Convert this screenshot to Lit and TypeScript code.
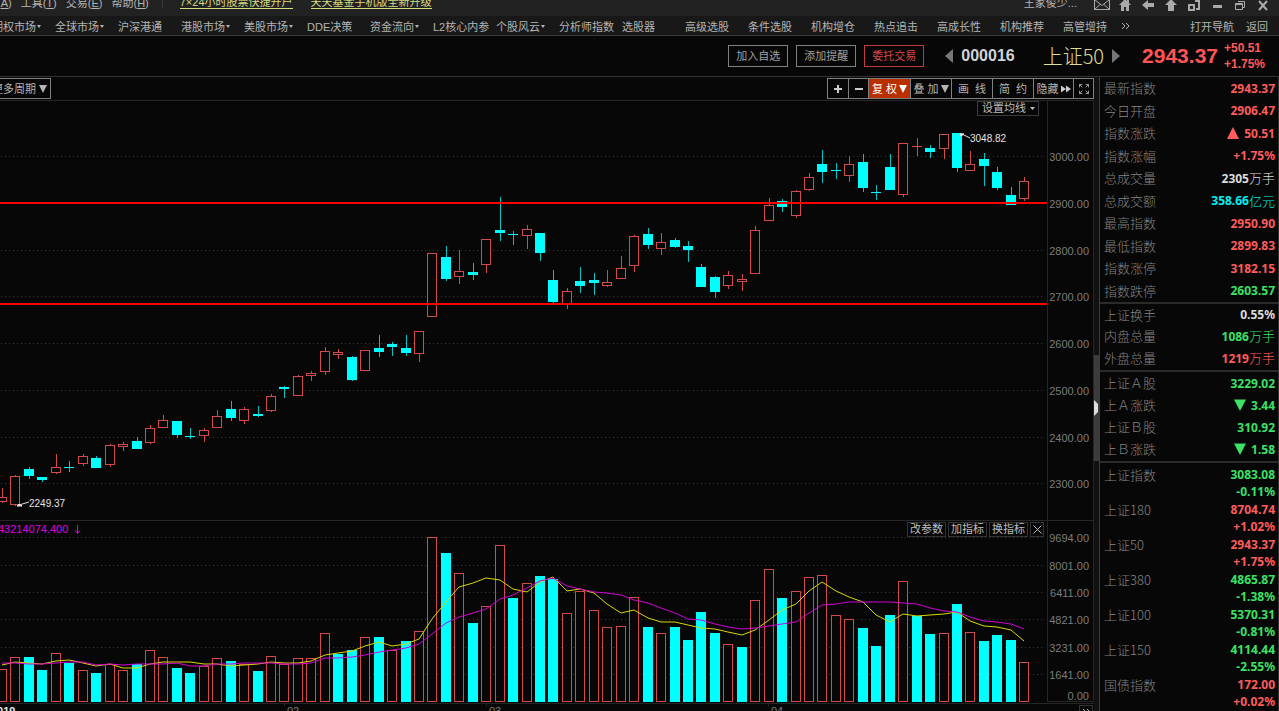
import { LitElement, html, svg, css } from "lit";
import { customElement } from "lit/decorators.js";
import { classMap } from "lit/directives/class-map.js";

type Candle = [kind: "r" | "c", high: number, top: number, bottom: number, low: number, volume: number];

/* One entry per trading day: colour, high, body top, body bottom, low, top of volume bar */
const CANDLES: Candle[] = [
  ["r", 488, 497, 502, 503, 669], ["r", 475, 476, 505, 506, 657], ["c", 467, 469, 476, 479, 657],
  ["c", 477, 477, 480, 482, 670], ["r", 454, 467, 473, 474, 653], ["c", 461, 467, 468, 472, 663],
  ["r", 454, 456, 464, 466, 670], ["c", 456, 458, 468, 468, 673], ["r", 444, 445, 465, 467, 664],
  ["r", 442, 444, 447, 451, 670], ["c", 437, 441, 449, 449, 664], ["r", 425, 428, 443, 444, 650],
  ["r", 415, 420, 428, 428, 657], ["c", 421, 421, 435, 438, 668], ["c", 428, 436, 437, 439, 673],
  ["r", 428, 430, 436, 442, 666], ["r", 410, 416, 428, 428, 658], ["c", 401, 409, 418, 421, 661],
  ["r", 407, 409, 421, 424, 664], ["c", 406, 414, 416, 417, 671], ["r", 394, 396, 411, 412, 656],
  ["c", 386, 387, 389, 398, 664], ["r", 375, 376, 396, 396, 658], ["r", 371, 373, 376, 381, 658],
  ["r", 347, 351, 372, 375, 633], ["r", 349, 352, 355, 359, 654], ["c", 356, 357, 380, 381, 650],
  ["r", 350, 350, 371, 371, 637], ["c", 335, 348, 352, 357, 637], ["c", 342, 344, 347, 356, 650],
  ["c", 335, 348, 353, 356, 641], ["r", 331, 331, 354, 362, 631], ["r", 253, 253, 317, 317, 537],
  ["c", 246, 257, 279, 281, 553], ["r", 250, 271, 277, 284, 573], ["c", 263, 272, 275, 280, 623],
  ["r", 239, 239, 265, 273, 606], ["c", 197, 230, 233, 241, 545], ["c", 231, 234, 235, 245, 598],
  ["r", 225, 229, 236, 249, 583], ["c", 233, 233, 253, 261, 576], ["c", 270, 280, 302, 303, 579],
  ["r", 288, 291, 304, 309, 613], ["c", 267, 281, 286, 293, 591], ["c", 273, 280, 283, 295, 610],
  ["r", 270, 282, 286, 287, 627], ["r", 256, 268, 279, 279, 626], ["r", 235, 236, 266, 272, 597],
  ["c", 228, 234, 245, 249, 627], ["r", 233, 242, 249, 255, 633], ["c", 238, 240, 247, 248, 627],
  ["c", 241, 246, 250, 262, 640], ["c", 264, 267, 287, 287, 612], ["c", 276, 277, 292, 298, 633],
  ["r", 271, 275, 286, 289, 644], ["r", 274, 279, 282, 291, 647], ["r", 226, 230, 274, 274, 600],
  ["r", 198, 205, 221, 221, 569], ["c", 199, 201, 207, 212, 598], ["r", 190, 191, 216, 218, 591],
  ["r", 173, 177, 190, 191, 577], ["c", 150, 164, 172, 183, 575], ["c", 163, 170, 171, 179, 615],
  ["r", 156, 164, 176, 182, 619], ["c", 154, 162, 188, 192, 628], ["c", 185, 192, 193, 200, 646],
  ["c", 154, 167, 190, 190, 615], ["r", 143, 143, 195, 197, 581], ["r", 138, 146, 147, 156, 616],
  ["c", 145, 148, 152, 158, 634], ["r", 134, 134, 149, 159, 633], ["c", 133, 133, 168, 172, 604],
  ["r", 151, 164, 171, 171, 632], ["c", 153, 159, 166, 186, 641], ["c", 167, 172, 188, 190, 635],
  ["c", 187, 195, 205, 205, 640], ["r", 177, 181, 199, 201, 662],
];

/* Days whose volume bar takes the other colour than the candle */
const VOLUME_FLIPS: Record<number, "r" | "c"> = {
  21: "r", 25: "c", 29: "r", 37: "r", 43: "r", 44: "r", 55: "c", 61: "r", 62: "r", 68: "c",
};

const PITCH = 13.45;
const centre = (i: number) => Math.round(2 + PITCH * i);

const MA_FAST = [
  665, 662, 663, 664, 661, 660, 663, 666, 664, 668, 668, 664, 662, 662, 662, 664, 664, 666, 665, 664, 662, 663, 663,
  661, 655, 653, 651, 646, 642, 646, 644, 639, 619, 602, 587, 583, 578, 580, 589, 592, 582, 577, 591, 589, 593, 604,
  613, 610, 618, 622, 622, 625, 628, 629, 632, 635, 630, 620, 610, 604, 591, 582, 591, 597, 602, 615, 622, 614, 616,
  615, 614, 612, 621, 626, 627, 630, 641,
];
const MA_SLOW = [
  663, 663, 664, 664, 663, 662, 662, 665, 664, 665, 664, 664, 664, 663, 666, 666, 664, 664, 663, 663, 663, 664, 664,
  663, 658, 658, 657, 655, 652, 650, 648, 644, 634, 623, 617, 613, 609, 599, 595, 588, 581, 578, 586, 589, 592, 593,
  595, 600, 603, 608, 613, 619, 620, 624, 627, 629, 628, 626, 624, 622, 613, 605, 604, 602, 602, 602, 602, 603, 604,
  608, 611, 612, 617, 621, 622, 624, 629,
];
const polyline = (ys: number[]) => ys.map((y, i) => `${centre(i)},${y}`).join(" ");

const PRICE_AXIS: [string, number][] = [
  ["3000.00", 156], ["2900.00", 203], ["2800.00", 250], ["2700.00", 296],
  ["2600.00", 343], ["2500.00", 390], ["2400.00", 437], ["2300.00", 483],
];
const VOLUME_AXIS: [string, number][] = [
  ["9694.00", 537], ["8001.00", 565], ["6411.00", 592], ["4821.00", 619], ["3231.00", 647], ["1641.00", 674],
];

@customElement("stock-chart")
class StockChart extends LitElement {
  static styles = css`
    :host { display: flex; flex-direction: column; flex: 1; min-height: 0; }
    .pane { position: relative; display: flex; justify-content: flex-end; overflow: hidden; flex: none; }
    .price { height: 420px; }
    .volume { height: 183px; }
    .time { height: 17px; }
    svg { display: block; flex: none; overflow: visible; width: 1094px; height: 100%; }
    .crisp { shape-rendering: crispEdges; }
    .grid { stroke: #363636; stroke-dasharray: 1 3; }
    .frame { stroke: #262626; fill: none; }
    .rise { fill: #070707; stroke: #d24a4a; }
    .wick-r { stroke: #d24a4a; }
    .fall { fill: #00ffff; }
    .wick-c { stroke: #00c4c4; }
    .level { fill: #ff0000; }
    text { font-family: "Liberation Sans", sans-serif; font-size: 11px; fill: #7c7c7c; }
    .note { font-size: 10px; fill: #e4e4e4; }
    .pointer { stroke: #e4e4e4; fill: #e4e4e4; }
    .ma { fill: none; }
    .fast { stroke: #d8d800; }
    .slow { stroke: #d400d4; }
    .sum { fill: #e000e0; }
    .arrow { fill: none; stroke: #e000e0; }
    .year { fill: #e4e4e4; font-weight: bold; }
    .tools { position: absolute; top: 2px; right: 50px; display: flex; gap: 2px; }
    button {
      font: 11px/13px "Liberation Sans", "Noto Sans CJK SC", sans-serif;
      margin: 0; color: #bdbdbd; background: #070707; border: 1px solid #333; padding: 0 2px;
      display: flex; align-items: center; justify-content: center; gap: 4px; height: 15px; white-space: nowrap;
    }
    .average { position: absolute; top: 1px; right: 55px; padding: 0 3px 0 4px; border-color: #3a3a3a; }
    .close { width: 14px; padding: 0; }
    .icon { width: 9px; height: 9px; }
    .caret { width: 5px; height: 3px; }
    .more { position: absolute; top: 2px; right: 1px; width: 14px; padding: 0; }
  `;

  private candle([kind, high, top, bottom, low]: Candle, i: number) {
    const x = centre(i);
    const flat = bottom - top <= 1;
    const body = kind === "c"
      ? svg`<rect class="fall" x=${x - 5} y=${top} width="10" height=${bottom - top}></rect>`
      : flat
        ? svg`<line class="wick-r" x1=${x - 5} x2=${x + 5} y1=${top + 0.5} y2=${top + 0.5}></line>`
        : svg`<rect class="rise" x=${x - 4.5} y=${top + 0.5} width="9" height=${bottom - top - 1}></rect>`;
    return svg`<line class="wick-${kind}" x1=${x + 0.5} x2=${x + 0.5} y1=${high} y2=${low}></line>${body}`;
  }

  private bar([kind, , , , , top]: Candle, i: number) {
    const x = centre(i);
    return (VOLUME_FLIPS[i] ?? kind) === "c"
      ? svg`<rect class="fall" x=${x - 5} y=${top} width="10" height=${702 - top}></rect>`
      : svg`<rect class="rise" x=${x - 4.5} y=${top + 0.5} width="9" height=${701 - top}></rect>`;
  }

  private axis(rows: [string, number][]) {
    return rows.map(([label, y]) => svg`
      <line class="grid crisp" x1="-2999" x2="1045" y1=${y + 0.5} y2=${y + 0.5}></line>
      <text x="1089" y=${y + 5} text-anchor="end">${label}</text>`);
  }

  render() {
    return html`
      <div class="pane price">
        <svg viewBox="0 100 1094 420">
          ${this.axis(PRICE_AXIS)}
          <path class="frame crisp" d="M-2999 100.5H1094M1047.5 100V520M1093.5 100V520"></path>
          <g class="crisp">${CANDLES.map((c, i) => this.candle(c, i))}</g>
          <rect class="level" x="-2999" y="202" width="4046" height="2"></rect>
          <rect class="level" x="-2999" y="303" width="4046" height="2"></rect>
          <path class="pointer" d="M960 134h4l-3 2zM962 134l8 4"></path>
          <text class="note" x="970" y="142">3048.82</text>
          <path class="pointer" d="M17 506h5l-3-2zM19 505l10-3"></path>
          <text class="note" x="29" y="507">2249.37</text>
        </svg>
        <button class="average">设置均线
          <svg class="caret" viewBox="0 0 5 3"><path fill="#bdbdbd" d="M0 0h5L2.500 3z"></path></svg>
        </button>
      </div>
      <div class="pane volume">
        <svg viewBox="0 520 1094 183">
          ${this.axis(VOLUME_AXIS)}
          <text x="1089" y="700" text-anchor="end">0.00</text>
          <path class="frame crisp" d="M-2999 520.5H1094M1047.5 520V702M1093.5 520V702M1047 701.500H1094"></path>
          <g class="crisp">${CANDLES.map((c, i) => this.bar(c, i))}</g>
          <polyline class="ma fast" points=${polyline(MA_FAST)}></polyline>
          <polyline class="ma slow" points=${polyline(MA_SLOW)}></polyline>
          <text class="sum" x="-2" y="533">43214074.400</text>
          <path class="arrow" d="M77.500 525v8M75 530.500l2.500 3l2.500-3"></path>
        </svg>
        <div class="tools">
          <button>改参数</button><button>加指标</button><button>换指标</button>
          <button class="close" aria-label="关闭">
            <svg class="icon" viewBox="0 0 9 9"><path stroke="#bdbdbd" d="M0.500 0.500l8 8M8.500 0.500l-8 8"></path></svg>
          </button>
        </div>
      </div>
      <div class="pane time">
        <svg viewBox="0 703 1094 17">
          <path class="frame crisp" d="M-2999 703.500H1094M284.500 703v3M486.500 703v3M768.500 703v3"></path>
          <text class="year" x="-9" y="715">2019</text>
          <text x="287" y="715">02</text>
          <text x="489" y="715">03</text>
          <text x="771" y="715">04</text>
        </svg>
        <button class="more" aria-label="更多">
          <svg class="icon" viewBox="0 0 9 9"><path fill="none" stroke="#bdbdbd" d="M1 1l3 3l-3 3M5 1l3 3l-3 3"></path></svg>
        </button>
      </div>`;
  }
}

type Row = [label: string, value: string, tone: string, unit?: string, mark?: "up" | "down"];
const QUOTES: Row[] = [
  ["最新指数", "2943.37", "red"], ["今日开盘", "2906.47", "red"], ["指数涨跌", "50.51", "red", "", "up"],
  ["指数涨幅", "+1.75%", "red"], ["总成交量", "2305", "white", "万手"], ["总成交额", "358.66", "cyan", "亿元"],
  ["最高指数", "2950.90", "red"], ["最低指数", "2899.83", "red"], ["指数涨停", "3182.15", "red"],
  ["指数跌停", "2603.57", "green"],
];
const TURNOVER: Row[] = [
  ["上证换手", "0.55%", "white"], ["内盘总量", "1086", "green", "万手"], ["外盘总量", "1219", "red", "万手"],
];
const SHARES: Row[] = [
  ["上证Ａ股", "3229.02", "green"], ["上Ａ涨跌", "3.44", "green", "", "down"],
  ["上证Ｂ股", "310.92", "green"], ["上Ｂ涨跌", "1.58", "green", "", "down"],
];
const INDICES: [string, string, string, string][] = [
  ["上证指数", "3083.08", "-0.11%", "green"], ["上证180", "8704.74", "+1.02%", "red"],
  ["上证50", "2943.37", "+1.75%", "red"], ["上证380", "4865.87", "-1.38%", "green"],
  ["上证100", "5370.31", "-0.81%", "green"], ["上证150", "4114.44", "-2.55%", "green"],
  ["国债指数", "172.00", "+0.02%", "red"],
];

@customElement("quote-panel")
class QuotePanel extends LitElement {
  static styles = css`
    :host {
      display: block; box-sizing: border-box; width: 180px; flex: none; overflow: hidden;
      border-left: 1px solid #3c3c3c; border-right: 1px solid #2e2e2e;
      font: 13px/18px "Noto Sans CJK SC", sans-serif; font-weight: 300;
    }
    dl { margin: 0; display: grid; grid-auto-rows: 1fr; box-sizing: border-box; border-bottom: 2px solid #2b2b2b; }
    .ten { height: 227px; }
    .three { height: 68px; padding-bottom: 1px; }
    .four { height: 91px; padding-bottom: 1px; }
    .indices { height: 248px; padding-top: 3px; border: 0; }
    .row { display: flex; justify-content: space-between; align-items: center; padding: 0 3px 0 4px; }
    .pair { align-items: flex-start; }
    .pair dt { line-height: 17px; }
    dt { color: #858585; }
    dd { margin: 0; display: flex; align-items: center; }
    .stack { flex-direction: column; align-items: flex-end; }
    b { font: bold 12px/17px "Noto Sans", sans-serif; }
    .red { color: #ff5c5c; }
    .green { color: #3be266; }
    .white { color: #dcdcdc; }
    .cyan { color: #00f0f0; }
    .mark { width: 12px; height: 12px; margin-right: 5px; fill: currentColor; }
  `;

  private row([label, value, tone, unit, mark]: Row) {
    return html`<div class="row"><dt>${label}</dt>
      <dd class=${tone}>${mark
        ? html`<svg class="mark" viewBox="0 0 12 12"><path d=${mark === "up" ? "M0 12L6 0l6 12z" : "M0 0.500h12L6 12z"}></path></svg>`
        : ""}<b>${value}</b>${unit}</dd></div>`;
  }

  render() {
    return html`
      <dl class="ten">${QUOTES.map((r) => this.row(r))}</dl>
      <dl class="three">${TURNOVER.map((r) => this.row(r))}</dl>
      <dl class="four">${SHARES.map((r) => this.row(r))}</dl>
      <dl class="indices">${INDICES.map(([name, value, change, tone]) => html`
        <div class="row pair"><dt>${name}</dt><dd class="stack ${tone}"><b>${value}</b><b>${change}</b></dd></div>`)}</dl>`;
  }
}

const NAV: [string, boolean][] = [
  ["期权市场", true], ["全球市场", true], ["沪深港通", false], ["港股市场", true], ["美股市场", true],
  ["DDE决策", false], ["资金流向", true], ["L2核心内参", false], ["个股风云", true], ["分析师指数", false],
  ["选股器", false], ["高级选股", false], ["条件选股", false], ["机构增仓", false], ["热点追击", false],
  ["高成长性", false], ["机构推荐", false], ["高管增持", false],
];

const WINDOW_ICONS: [string, ReturnType<typeof svg>][] = [
  ["消息", svg`<path fill="none" stroke="#aaa" d="M0.500 2.500h15v10h-15zM0.500 2.500l7.500 6l7.500-6M0.500 12.500l5.500-5M15.500 12.500l-5.500-5"></path>`],
  ["首页", svg`<path fill="#aaa" d="M8 2L2 8h2v6h3v-4h2v4h3V8h2l-2-2V3h-2v1z"></path>`],
  ["后退", svg`<path fill="#aaa" d="M2 8l6-5v3h6v4H8v3z"></path>`],
  ["上移", svg`<path fill="#aaa" d="M8 2l6 6h-3v6H5V8H2z"></path>`],
  ["切换", svg`<path fill="none" stroke="#aaa" stroke-width="2" d="M3 8h5v5H3zM9 4h4v8h-3"></path>`],
  ["最小化", svg`<path fill="#aaa" d="M4 8h9v3H4z"></path>`],
  ["还原", svg`<path fill="none" stroke="#aaa" d="M3.500 6.500h7v6h-7zM3 7.500h8M6 4.500h6.500v6H11"></path>`],
  ["关闭", svg`<path fill="none" stroke="#aaa" stroke-width="2" d="M4 4l8 9M12 4l-8 9"></path>`],
];

@customElement("app-root")
class AppRoot extends LitElement {
  static styles = css`
    :host {
      display: flex; flex-direction: column; height: 100vh; overflow: hidden; background: #070707; color: #b4b4b4;
      font: 11px/14px "Liberation Sans", "Noto Sans CJK SC", sans-serif;
    }
    button { font: inherit; color: inherit; background: none; border: 0; margin: 0; padding: 0; white-space: nowrap; }
    a { color: inherit; text-decoration: none; }
    .titlebar { display: flex; align-items: flex-end; height: 16px; flex: none; background: #222; overflow: hidden; }
    .menu { display: flex; gap: 9px; margin-left: -25px; padding-bottom: 6px; }
    .rule { width: 1px; height: 8px; margin: 0 17px 8px 13px; background: #3a3a3a; }
    .promos { display: flex; gap: 18px; padding-bottom: 7px; color: #d6dc80; }
    .promos a { border-bottom: 1px solid #d6dc80; line-height: 12px; }
    .tail { margin-left: auto; display: flex; align-items: flex-end; padding-right: 8px; }
    .user { padding-bottom: 6px; margin-right: 17px; }
    .icons { display: flex; gap: 7px; padding-bottom: 3px; }
    .icons svg { display: block; width: 16px; height: 16px; }
    .nav { display: flex; align-items: center; height: 20px; box-sizing: border-box; flex: none; background: #181818; border-bottom: 1px solid #3a3a3a; overflow: hidden; padding: 2px 11px 0 0; }
    .nav ul { display: flex; margin: 0 0 0 -8px; padding: 0; list-style: none; }
    .nav li { width: 63px; white-space: nowrap; flex: none; }
    .nav li:last-child { width: 58px; }
    .drop::after { content: ""; display: inline-block; margin: 0 0 3px 1px; border: 2px solid transparent; border-top: 3px solid #b4b4b4; border-bottom: 0; }
    .chev { display: block; width: 9px; height: 9px; }
    .nav-end { margin-left: auto; display: flex; gap: 12px; }
    .head { display: flex; justify-content: flex-end; align-items: center; height: 41px; box-sizing: border-box; flex: none; padding-right: 14px; border-bottom: 1px solid #333; }
    .act { width: 60px; height: 22px; margin-right: 8px; border: 1px solid #808080; color: #a0a0a0; }
    .trade { border-color: #c03c3c; color: #d84848; margin-right: 21px; }
    .tri { display: block; width: 8px; height: 14px; fill: #777; }
    .code { font-size: 16px; font-weight: bold; color: #d0d4d8; margin: 0 28px 0 8px; }
    .name { font: 300 20px/26px "Noto Sans CJK SC", sans-serif; color: #e0dc90; margin-right: 8px; }
    .last { font-size: 21px; font-weight: bold; color: #ff5555; margin: 0 6px 0 22px; }
    .delta { display: grid; font: bold 12px/16px "Liberation Sans", sans-serif; color: #ff5c5c; width: 41px; }
    .body { display: flex; flex: 1; min-height: 0; }
    .main { display: flex; flex-direction: column; flex: 1; min-width: 0; }
    .toolbar { display: flex; justify-content: space-between; align-items: center; height: 23px; flex: none; overflow: hidden; }
    .period { display: flex; align-items: center; gap: 3px; border: 1px solid #808080; height: 21px; padding: 0 3px 0 8px; margin-left: -17px; box-sizing: border-box; }
    .set { display: flex; border: 1px solid #808080; height: 21px; box-sizing: border-box; }
    .set button { display: flex; align-items: center; justify-content: center; gap: 2px; width: 41px; border-left: 1px solid #808080; box-sizing: border-box; }
    .set .slim { width: 20px; }
    .set .first { border-left: 0; }
    .set .active { background: #b93000; color: #fff; width: 42px; }
    .set .hide { width: 40px; }
    .down { width: 8px; height: 8px; fill: currentColor; flex: none; }
    .glyph { width: 10px; height: 10px; flex: none; }
    .splitter { width: 5px; flex: none; display: flex; flex-direction: column; background: #111; }
    .handle { margin-top: 278px; height: 106px; background: #3c3c3c; display: flex; align-items: center; width: 5px; }
    .handle svg { width: 4px; height: 16px; fill: #ddd; }
  `;

  private down() {
    return html`<svg class="down" viewBox="0 0 8 8"><path d="M0 0h8L4 8z"></path></svg>`;
  }

  render() {
    return html`
      <header class="titlebar">
        <div class="menu">
          <button>查看(<u>A</u>)</button><button>工具(<u>T</u>)</button><button>交易(<u>E</u>)</button><button>帮助(<u>H</u>)</button>
        </div>
        <div class="rule"></div>
        <div class="promos"><a href="#open">7×24小时股票快捷开户</a><a href="#app">天天基金手机版全新升级</a></div>
        <div class="tail">
          <span class="user">王家俊少...</span>
          <div class="icons">${WINDOW_ICONS.map(([label, shape]) => html`
            <button aria-label=${label}><svg viewBox="0 0 16 16">${shape}</svg></button>`)}</div>
        </div>
      </header>
      <nav class="nav">
        <ul>${NAV.map(([label, drop]) => html`<li><a href="#nav" class=${classMap({ drop })}>${label}</a></li>`)}</ul>
        <svg class="chev" viewBox="0 0 9 9"><path fill="none" stroke="#b4b4b4" d="M1 1l3 3l-3 3M5 1l3 3l-3 3"></path></svg>
        <div class="nav-end"><a href="#guide">打开导航</a><a href="#back">返回</a></div>
      </nav>
      <section class="head">
        <button class="act">加入自选</button>
        <button class="act">添加提醒</button>
        <button class="act trade">委托交易</button>
        <svg class="tri" viewBox="0 0 8 14"><path d="M8 0v14L0 7z"></path></svg>
        <span class="code">000016</span>
        <span class="name">上证50</span>
        <svg class="tri" viewBox="0 0 8 14"><path d="M0 0v14l8-7z"></path></svg>
        <span class="last">2943.37</span>
        <span class="delta"><span>+50.51</span><span>+1.75%</span></span>
      </section>
      <div class="body">
        <main class="main">
          <div class="toolbar">
            <button class="period">更多周期${this.down()}</button>
            <div class="set">
              <button class="slim first" aria-label="放大"><svg class="glyph" viewBox="0 0 10 10"><path fill="#ccc" d="M4 1h2v3h3v2H6v3H4V6H1V4h3z"></path></svg></button>
              <button class="slim" aria-label="缩小"><svg class="glyph" viewBox="0 0 10 10"><path fill="#ccc" d="M1 4h8v2H1z"></path></svg></button>
              <button class="active">复 权 ${this.down()}</button>
              <button>叠 加 ${this.down()}</button>
              <button>画&nbsp; 线</button>
              <button>简&nbsp; 约</button>
              <button class="hide">隐藏<svg class="glyph" viewBox="0 0 10 10"><path fill="#ccc" d="M0 1.500l5 3.500l-5 3.500zM5 1.500l5 3.500l-5 3.500z"></path></svg></button>
              <button class="slim" aria-label="全屏"><svg class="glyph" viewBox="0 0 12 12"><path fill="none" stroke="#bbb" d="M0.500 4V0.500H4M0.500 0.500l3.500 3.500M8 0.500h3.500V4M11.500 0.500L8 4M0.500 8v3.500H4M0.500 11.500L4 8M8 11.500h3.500V8M11.500 11.500L8 8"></path></svg></button>
            </div>
          </div>
          <stock-chart></stock-chart>
        </main>
        <div class="splitter"><div class="handle"><svg viewBox="0 0 4 16"><path d="M0 0l4 4v8l-4 4z"></path></svg></div></div>
        <quote-panel></quote-panel>
      </div>`;
  }
}
